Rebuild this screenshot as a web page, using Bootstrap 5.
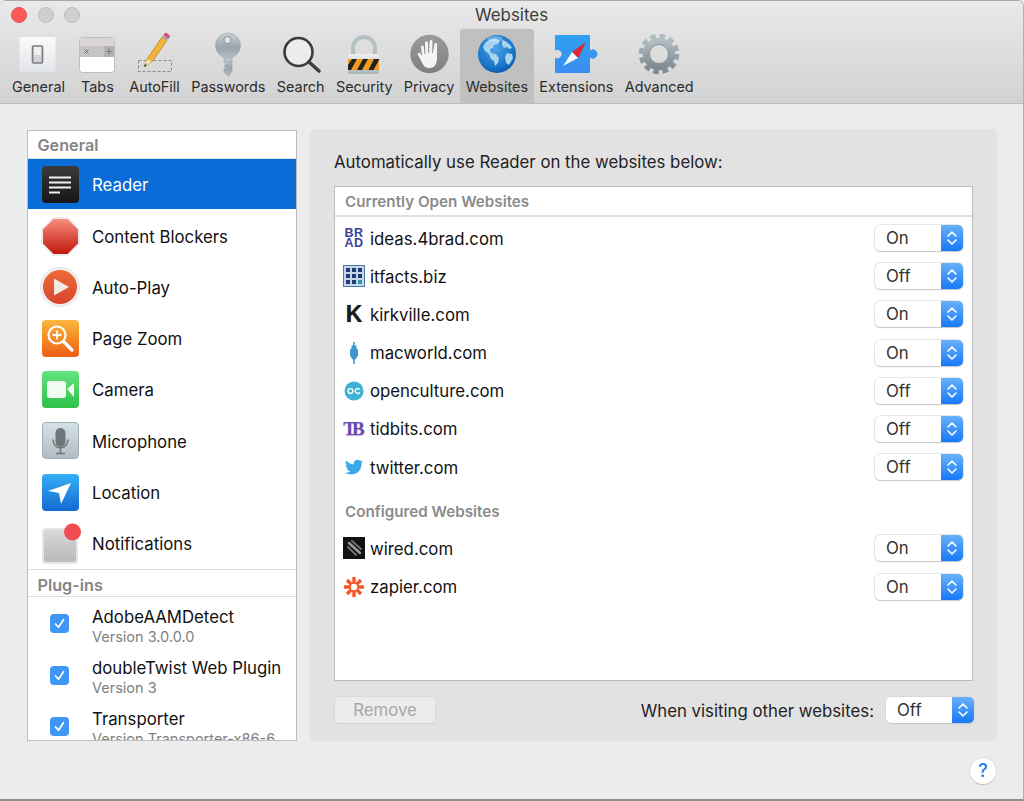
<!DOCTYPE html>
<html lang="en"><head><meta charset="utf-8"><title>Websites</title>
<link rel="stylesheet" href="https://cdn.jsdelivr.net/npm/bootstrap@5.3.0/dist/css/bootstrap.min.css">
<style>
html,body{height:801px;overflow:hidden}
body{font-family:Inter,"Liberation Sans",sans-serif;font-size:16.8px;color:#111;background:#ececec}
.win{height:801px;display:flex;flex-direction:column;border-top:1px solid #a9a9a9;border-bottom:2px solid #8f8f8f;border-right:1px solid #b0b0b0;border-radius:6px 6px 0 0;overflow:hidden}
.chrome{height:103px;flex:none;background:linear-gradient(#e9e9e9,#d2d2d2);border-bottom:1px solid #bcbcbc}
.titlerow{height:28px;display:grid;grid-template-columns:minmax(0,1fr) auto minmax(0,1fr);align-items:center}
.wintitle{font-size:16.9px;color:#3c3c3c;padding-top:2px}
.lights{display:flex;padding-left:11px}
.light{width:16px;height:16px;border-radius:50%;background:#cfcfcf;border:1px solid #bdbdbd;margin-right:10.5px}
.light.red{background:#fb5c5a;border-color:#ec4a48}
.toolrow{display:flex;padding-left:6.3px}
.tool{display:flex;flex-direction:column;align-items:center;height:74px;padding:3px 5.7px 0;font-size:14.4px;color:#2c2c2c;white-space:nowrap;border-radius:3px 3px 0 0}
.tool.t-gen{padding-right:8px}
.tool.t-tabs{padding-left:8px;padding-right:8px}
.tool.t-fill{padding-left:7.500px}
.tool.on{background:#c0c0c0}
.tool svg{height:46px;width:46px;flex:none;margin:0 -10px}
.tool span{line-height:18px}
.mainarea{flex:none;display:flex;gap:13px;padding:25px 26px 0 27px;height:638px}
.side{width:270px;height:611px;background:#fff;border:1px solid #bdbdbd;overflow:hidden;flex:none;margin-top:1px}
.shead{height:27.5px;padding-left:9.5px;font-size:16.2px;font-weight:600;color:#858585;line-height:28px;border-bottom:1px solid #dedede}
.shead.second{border-top:1px solid #dedede;height:28.5px;line-height:30px}
.srow{height:51.3px;display:flex;align-items:center;font-size:16.8px;color:#111;padding-left:12px;padding-top:4px}
.srow.sel{background:#0a6cd7;color:#fff;height:50px;margin-bottom:1px}
.srow svg{width:40px;height:40px;flex:none;margin-right:12px;margin-bottom:2px}
.plug{padding-left:22px;height:51.3px}
.plug .chk{width:19px;height:19px;border-radius:4px;background:#3f97f5;flex:none;margin-right:23px;margin-bottom:2px;display:flex;align-items:center;justify-content:center}
.plug .chk svg{width:13px;height:13px;margin:0}
.plug .lines{line-height:20px;white-space:nowrap;margin-top:4px}
.ver{font-size:14.5px;color:#7f7f7f;display:block}
.panel{width:687px;height:612px;background:#e2e2e2;border-radius:5px;padding:0 24px;display:flex;flex-direction:column}
.paneltitle{height:57px;line-height:66px;font-size:16.8px;color:#222;white-space:nowrap}
.listbox{height:495px;background:#fff;border:1px solid #bcbcbc;flex:none}
.lhead{font-size:15.2px;font-weight:600;color:#8b8b8b;padding-left:10px;line-height:30px;height:30px;white-space:nowrap}
.lhead.rule{border-bottom:2px solid #dedede;margin-bottom:2px}
.lhead.conf{margin-top:11px;line-height:30px;height:32px}
.lrow{height:38.2px;display:flex;align-items:center;padding:2px 9px 0 8px;font-size:16.8px;color:#111}
.fav{width:22px;height:22px;flex:none;margin-right:5px;margin-bottom:2px;display:flex;align-items:center;justify-content:center}
.fav svg{width:22px;height:22px;display:block}
.brad{font:700 12.500px/10px "Liberation Sans",sans-serif;color:#3a3f9b;text-align:center;letter-spacing:.5px}
.kk{font:900 23px/22px "Liberation Sans",sans-serif;color:#1a1a1a;text-shadow:0 0 1px #777}
.tb{font:700 19px/22px "Liberation Serif",serif;color:#6a4bad;letter-spacing:-4px;margin-right:4px;text-shadow:0 1px 1px #b9a8dc}
.pop{width:88px;height:26px;flex:none;margin-left:auto;margin-bottom:2px;display:flex;background:#fff;border-radius:5px;box-shadow:0 0 0 .5px #d0d0d0,0 1px 1px #bdbdbd;overflow:hidden;font-size:16.8px;color:#333}
.pop b{flex:1;font-weight:400;padding-left:11px;line-height:26px}
.pop i{width:22px;display:flex;align-items:center;justify-content:center;background:linear-gradient(#68b1fa,#1679f8)}
.pop i svg{width:12px;height:18px}
.footrow{display:flex;align-items:center;height:26px;margin-top:16px;padding-left:1px;margin-right:-1px}
.rm{width:100px;height:26px;background:#ececec;border:0;border-radius:4px;box-shadow:0 0 0 .5px #d4d4d4,0 1px 1px #cdcdcd;color:#a7a7a7;font-size:16.8px;padding:0;line-height:26px}
.visit{margin-left:auto;margin-right:12px;padding-top:3px;font-size:16.8px;color:#222}
.footrow .pop{margin:0}
.helprow{flex:1;display:flex;justify-content:flex-end;padding:16px 27px 0 0}
.help{width:26px;height:26px;border-radius:50%;background:#fff;box-shadow:0 0 0 .5px #cfcfcf,0 1px 1px #b5b5b5;color:#1a7cf0;font-size:18px;font-weight:500;text-align:center;line-height:26px}
</style></head><body>
<svg width="0" height="0" class="position-absolute"><defs>
<linearGradient id="gGen" x1="0" y1="0" x2="0" y2="1"><stop offset="0" stop-color="#fafafa"/><stop offset="1" stop-color="#e2e5ea"/></linearGradient>
<linearGradient id="gKey" x1="0" y1="0" x2="0" y2="1"><stop offset="0" stop-color="#c9d3d7"/><stop offset=".6" stop-color="#97a4aa"/><stop offset="1" stop-color="#b7c0c4"/></linearGradient>
<linearGradient id="gLock" x1="0" y1="0" x2="0" y2="1"><stop offset="0" stop-color="#f0f0f0"/><stop offset="1" stop-color="#a9b5ba"/></linearGradient>
<linearGradient id="gHand" x1="0" y1="0" x2="0" y2="1"><stop offset="0" stop-color="#9a9a9a"/><stop offset="1" stop-color="#7f7f7f"/></linearGradient>
<radialGradient id="gGlobe" cx=".45" cy=".35" r=".75"><stop offset="0" stop-color="#4ca4e8"/><stop offset=".7" stop-color="#1670c4"/><stop offset="1" stop-color="#0a4c9a"/></radialGradient>
<linearGradient id="gPuz" x1="0" y1="0" x2="0" y2="1"><stop offset="0" stop-color="#2fa0f2"/><stop offset="1" stop-color="#3a8df0"/></linearGradient>
<linearGradient id="gGear" x1="0" y1="0" x2="0" y2="1"><stop offset="0" stop-color="#b3bec4"/><stop offset="1" stop-color="#7f8a90"/></linearGradient>
<linearGradient id="gRead" x1="0" y1="0" x2="0" y2="1"><stop offset="0" stop-color="#3a3a3a"/><stop offset="1" stop-color="#161616"/></linearGradient>
<linearGradient id="gStop" x1="0" y1="0" x2="0" y2="1"><stop offset="0" stop-color="#f98d7e"/><stop offset="1" stop-color="#c0170c"/></linearGradient>
<linearGradient id="gPlay" x1="0" y1="0" x2="0" y2="1"><stop offset="0" stop-color="#ee6a38"/><stop offset="1" stop-color="#d8452e"/></linearGradient>
<linearGradient id="gZoom" x1="0" y1="0" x2="0" y2="1"><stop offset="0" stop-color="#fbb73c"/><stop offset="1" stop-color="#ee5f12"/></linearGradient>
<linearGradient id="gCam" x1="0" y1="0" x2="0" y2="1"><stop offset="0" stop-color="#62e37c"/><stop offset="1" stop-color="#30c04a"/></linearGradient>
<linearGradient id="gMic" x1="0" y1="0" x2="0" y2="1"><stop offset="0" stop-color="#d5e2e8"/><stop offset="1" stop-color="#b0bcc1"/></linearGradient>
<linearGradient id="gLoc" x1="0" y1="0" x2="0" y2="1"><stop offset="0" stop-color="#36aef6"/><stop offset="1" stop-color="#126bd0"/></linearGradient>
<linearGradient id="gNot" x1="0" y1="0" x2="0" y2="1"><stop offset="0" stop-color="#d8d8d8"/><stop offset="1" stop-color="#b9b9b9"/></linearGradient>
<symbol id="chev" viewBox="0 0 12 18"><path d="M2 7l4-4 4 4M2 11l4 4 4-4" fill="none" stroke="#fff" stroke-width="1.6" stroke-linecap="round" stroke-linejoin="round"/></symbol>
<symbol id="tick" viewBox="0 0 13 13"><path d="M2.5 7l3 3.2 5-7.5" fill="none" stroke="#fff" stroke-width="1.7" stroke-linecap="round" stroke-linejoin="round"/></symbol>
</defs></svg>
<div class="win">
 <div class="chrome">
  <div class="titlerow">
   <div class="lights"><div class="light red"></div><div class="light"></div><div class="light"></div></div>
   <div class="wintitle">Websites</div><div></div>
  </div>
  <div class="toolrow">
   <div class="tool t-gen"><svg viewBox="0 0 46 46"><rect x="4.500" y="5" width="36" height="35" fill="url(#gGen)"/><rect x="17.500" y="14" width="10" height="17" rx="1" fill="#cfd2d6" stroke="#7c7c7c" stroke-width="1.6"/><rect x="19" y="15" width="7" height="8" fill="#eef0f2"/></svg><span>General</span></div>
   <div class="tool t-tabs"><svg viewBox="0 0 46 46"><rect x="5.500" y="5.500" width="35" height="35" rx="3" fill="#fff" stroke="#bdbdbd"/><path d="M6 9a3 3 0 0 1 3-3h28a3 3 0 0 1 3 3v5H6z" fill="#d9d5d9"/><rect x="6" y="14" width="34" height="11" fill="#c7c4c7"/><rect x="30" y="14" width="10" height="11" fill="#b4b1b4"/><path d="M10.500 17.500l4 4M14.500 17.500l-4 4" stroke="#6e6e6e"/><path d="M35 16.500v6M32 19.500h6" stroke="#7d7d7d" stroke-width="1.200"/></svg><span>Tabs</span></div>
   <div class="tool t-fill"><svg viewBox="0 0 46 46"><rect x="6.500" y="28.500" width="33" height="11" fill="none" stroke="#8a8a8a" stroke-dasharray="3 2"/><g transform="translate(4 -1)"><path d="M8 36l3-8L26 6l5 3.500L16 31z" fill="#f2b436" stroke="#a97a18" stroke-width=".6"/><path d="M8 36l3-8 5 3z" fill="#f3dfb6"/><path d="M8 36l1-3 2 1.300z" fill="#333"/><path d="M26 6l1.500-2 5 3.500-1.500 2z" fill="#a8a8a8"/><path d="M27.500 4l1-1.500a2 2 0 0 1 3 .2l1.500 1a2 2 0 0 1 .2 3l-.7 1z" fill="#d8517a"/></g></svg><span>AutoFill</span></div>
   <div class="tool"><svg viewBox="0 0 46 46"><path d="M19 24h8v15l-3 5h-1l-4-4v-3l2-1-2-2 2-2-2-2z" fill="url(#gKey)" stroke="#8c979c" stroke-width=".5"/><circle cx="23" cy="13.500" r="12.500" fill="url(#gKey)" stroke="#9aa5aa" stroke-width=".6"/><circle cx="22.500" cy="8" r="3.600" fill="#e2e2e2" stroke="#76838a" stroke-width=".8"/></svg><span>Passwords</span></div>
   <div class="tool"><svg viewBox="0 0 46 46"><circle cx="20.500" cy="20" r="14" fill="#ececec" stroke="#3a3a3a" stroke-width="2.600"/><path d="M31 30l10 9" stroke="#3e3e3e" stroke-width="3.600" stroke-linecap="round"/></svg><span>Search</span></div>
   <div class="tool"><svg viewBox="0 0 46 46"><path d="M12 24V16a11 11 0 0 1 22 0v8" fill="none" stroke="#b5c0c5" stroke-width="4"/><rect x="7" y="22" width="31" height="20" rx="1.500" fill="url(#gLock)"/><rect x="7" y="27" width="31" height="11" fill="#f39b1d"/><path d="M11 27h5l-6 11H7v-5zM22 27h5l-6 11h-5zM33 27h5v1l-5.500 10h-5z" fill="#222"/></svg><span>Security</span></div>
   <div class="tool"><svg viewBox="0 0 46 46"><circle cx="23.500" cy="22" r="19.200" fill="url(#gHand)"/><path transform="translate(.5 0)" d="M14.500 15c0-2 2.500-2 2.800 0l.7 7h.8l-.3-11c0-2.200 2.900-2.200 3 0l.3 10h.8l.5-11.500c.1-2 2.900-2 2.900 0l-.4 11.500h.8l1.400-8.800c.3-1.900 3-1.500 2.800.4L30.500 27c-.5 6-3 9-7.500 9-4 0-6-2-8-6.500l-3.500-6.500c-.9-1.800 1.400-3 2.500-1.500l1.700 2.700z" fill="#f4f4f4"/></svg><span>Privacy</span></div>
   <div class="tool on"><svg viewBox="0 0 46 46"><circle cx="23" cy="22" r="19" fill="url(#gGlobe)"/><path d="M11 11c3-3 8-5 12-4l3 2-2 3-4 1-1 3-3 1 1 4 5 1 3 4-1 5-3 3-1-5-3-2-2-5-4-3-2-4z" fill="#a9d3ef"/><path d="M28 8c4 1 8 4 10 8l-3 1-2-2-3 1-2-3zM33 21l5 1 1 4-4 7-3-2-1-6z" fill="#a9d3ef"/><ellipse cx="21" cy="7" rx="8" ry="3" fill="#fff" opacity=".28"/></svg><span>Websites</span></div>
   <div class="tool"><svg viewBox="0 0 46 46"><path d="M2 4a1 1 0 0 1 1-1h33a1 1 0 0 1 1 1v14.500a4.500 4.500 0 1 1 0 7V40a1 1 0 0 1-1 1H3a1 1 0 0 1-1-1V25.500a4.200 4.200 0 1 0 0-7z" fill="url(#gPuz)"/><path d="M33 10L25 26l-6-6z" fill="#e0262f"/><path d="M10 34l9-14 6 6z" fill="#f6f6f6"/></svg><span>Extensions</span></div>
   <div class="tool"><svg viewBox="0 0 46 46"><circle cx="23" cy="22" r="17.500" fill="none" stroke="url(#gGear)" stroke-width="5.500" stroke-dasharray="5.500 3.660"/><circle cx="23" cy="22" r="13" fill="none" stroke="url(#gGear)" stroke-width="6.500"/><circle cx="23" cy="22" r="9.500" fill="none" stroke="#6f7a80" stroke-width=".8"/></svg><span>Advanced</span></div>
  </div>
 </div>
 <div class="mainarea">
  <div class="side">
   <div class="shead">General</div>
   <div class="srow sel"><svg viewBox="0 0 40 40"><rect x="2" y="1" width="37" height="37" rx="4" fill="url(#gRead)"/><path d="M9 12.500h22M9 17.500h22M9 22.500h22M9 27.500h11" stroke="#f2f2f2" stroke-width="2"/></svg>Reader</div>
   <div class="srow"><svg viewBox="0 0 40 40"><path d="M13 1h15l12 12v15L28 40H13L1 28V13z" fill="#ececec"/><path d="M13.500 3h14l10.500 10.500v14L27.500 38h-14L3 27.500v-14z" fill="url(#gStop)"/></svg>Content Blockers</div>
   <div class="srow"><svg viewBox="0 0 40 40"><circle cx="20" cy="20" r="19.700" fill="#efefef" stroke="#d8d8d8" stroke-width=".6"/><circle cx="20" cy="20" r="17" fill="url(#gPlay)"/><path d="M14 11.500L29 20l-15 8.500z" fill="#f5e9e4"/></svg>Auto-Play</div>
   <div class="srow"><svg viewBox="0 0 40 40"><rect x="2" y="1" width="37" height="37" rx="4" fill="url(#gZoom)"/><circle cx="17" cy="16" r="8.500" fill="none" stroke="#fff" stroke-width="2.200"/><path d="M17 11.500v9M12.500 16h9" stroke="#fff" stroke-width="2"/><path d="M23.500 22.500L32 31" stroke="#fff" stroke-width="3.200" stroke-linecap="round"/></svg>Page Zoom</div>
   <div class="srow"><svg viewBox="0 0 40 40"><rect x="2" y="1" width="37" height="37" rx="4" fill="url(#gCam)"/><rect x="7" y="11" width="19" height="17" rx="3" fill="#f1fbf2"/><path d="M27 19l7-6v14z" fill="#f1fbf2"/></svg>Camera</div>
   <div class="srow"><svg viewBox="0 0 40 40"><rect x="2.500" y="1.500" width="36" height="36" rx="3.500" fill="url(#gMic)" stroke="#a3afb4"/><rect x="15.500" y="7" width="10" height="19" rx="5" fill="#6f7679"/><path d="M13 18.500c0 11 15 11 15 0M20.500 26v6M16 32.500h9" fill="none" stroke="#6f7679" stroke-width="1.500"/></svg>Microphone</div>
   <div class="srow"><svg viewBox="0 0 40 40"><rect x="2" y="1" width="37" height="37" rx="4" fill="url(#gLoc)"/><path d="M31 10L21 31l-2-11-11-2z" fill="#fff"/></svg>Location</div>
   <div class="srow"><svg viewBox="0 0 40 40" class="overflow-visible"><rect x="3" y="5" width="34" height="34" rx="3" fill="url(#gNot)" stroke="#e6e6e6" stroke-width="2"/><circle cx="32.500" cy="8" r="8.500" fill="#ef4b50"/></svg>Notifications</div>
   <div class="shead second">Plug-ins</div>
   <div class="srow plug"><div class="chk"><svg><use href="#tick"/></svg></div><div class="lines">AdobeAAMDetect<span class="ver">Version 3.0.0.0</span></div></div>
   <div class="srow plug"><div class="chk"><svg><use href="#tick"/></svg></div><div class="lines">doubleTwist Web Plugin<span class="ver">Version 3</span></div></div>
   <div class="srow plug"><div class="chk"><svg><use href="#tick"/></svg></div><div class="lines">Transporter<span class="ver">Version Transporter-x86-6</span></div></div>
  </div>
  <div class="panel">
   <div class="paneltitle">Automatically use Reader on the websites below:</div>
   <div class="listbox">
    <div class="lhead rule">Currently Open Websites</div>
    <div class="lrow"><div class="fav"><div class="brad">BR<br>AD</div></div>ideas.4brad.com<div class="pop"><b>On</b><i><svg><use href="#chev"/></svg></i></div></div>
    <div class="lrow"><div class="fav"><svg viewBox="0 0 22 22"><rect x=".5" y=".5" width="21" height="21" fill="#c8d6ea" stroke="#4e74ae"/><path d="M3 3h4v4H3zM9 3h4v4H9zM15 3h4v4h-4zM3 9h4v4H3zM9 9h4v4H9zM15 9h4v4h-4zM3 15h4v4H3zM9 15h4v4H9z" fill="#1d3d72"/><rect x="15" y="15" width="4" height="4" fill="#2a9a9a"/></svg></div>itfacts.biz<div class="pop"><b>Off</b><i><svg><use href="#chev"/></svg></i></div></div>
    <div class="lrow"><div class="fav"><div class="kk">K</div></div>kirkville.com<div class="pop"><b>On</b><i><svg><use href="#chev"/></svg></i></div></div>
    <div class="lrow"><div class="fav"><svg viewBox="0 0 22 22"><path d="M11 0v4M11 17v5" stroke="#3f97cf" stroke-width="1.600"/><path d="M8.500 3.500h5v3l1.500 1v6l-2.500 4h-3l-2.500-4v-6l1.500-1z" fill="#3f97cf"/></svg></div>macworld.com<div class="pop"><b>On</b><i><svg><use href="#chev"/></svg></i></div></div>
    <div class="lrow"><div class="fav"><svg viewBox="0 0 22 22"><circle cx="11" cy="11" r="9.500" fill="#3fb1d3"/><circle cx="7.500" cy="11" r="2.400" fill="none" stroke="#fff" stroke-width="1.400"/><path d="M16.800 9.500a2.500 2.500 0 1 0 0 3" fill="none" stroke="#fff" stroke-width="1.400"/></svg></div>openculture.com<div class="pop"><b>Off</b><i><svg><use href="#chev"/></svg></i></div></div>
    <div class="lrow"><div class="fav"><div class="tb">TB</div></div>tidbits.com<div class="pop"><b>Off</b><i><svg><use href="#chev"/></svg></i></div></div>
    <div class="lrow"><div class="fav"><svg viewBox="0 0 22 22"><path d="M20 5.500c-.7.300-1.400.5-2.100.6.800-.5 1.300-1.200 1.600-2-.7.400-1.500.7-2.300.9a3.700 3.700 0 0 0-6.300 3.400C7.800 8.200 5 6.700 3.200 4.400c-1 1.700-.5 3.900 1.100 5-.6 0-1.200-.2-1.700-.5 0 1.800 1.300 3.300 3 3.700-.5.100-1.100.2-1.700.1.500 1.500 1.900 2.500 3.500 2.600A7.500 7.500 0 0 1 2 16.800c6 3.500 17 1.500 16.500-9.800.6-.4 1.100-.9 1.500-1.500z" fill="#3ba9e8"/></svg></div>twitter.com<div class="pop"><b>Off</b><i><svg><use href="#chev"/></svg></i></div></div>
    <div class="lhead conf">Configured Websites</div>
    <div class="lrow"><div class="fav"><svg viewBox="0 0 22 22"><rect width="22" height="22" fill="#111"/><path d="M6 6l11 10" stroke="#999" stroke-width="2.500" stroke-linecap="round"/><path d="M9 4l9 8M5 10l8 8" stroke="#6f6f6f" stroke-width="2" stroke-linecap="round"/></svg></div>wired.com<div class="pop"><b>On</b><i><svg><use href="#chev"/></svg></i></div></div>
    <div class="lrow"><div class="fav"><svg viewBox="0 0 22 22"><path d="M11 1v20M1 11h20M4 4l14 14M18 4L4 18" stroke="#f5562a" stroke-width="3.400"/><circle cx="11" cy="11" r="3.200" fill="#fff"/></svg></div>zapier.com<div class="pop"><b>On</b><i><svg><use href="#chev"/></svg></i></div></div>
   </div>
   <div class="footrow"><button class="rm" type="button">Remove</button><div class="visit">When visiting other websites:</div><div class="pop"><b>Off</b><i><svg><use href="#chev"/></svg></i></div></div>
  </div>
 </div>
 <div class="helprow"><div class="help">?</div></div>
</div>
<script src="https://cdn.jsdelivr.net/npm/bootstrap@5.3.0/dist/js/bootstrap.bundle.min.js"></script>
</body></html>
